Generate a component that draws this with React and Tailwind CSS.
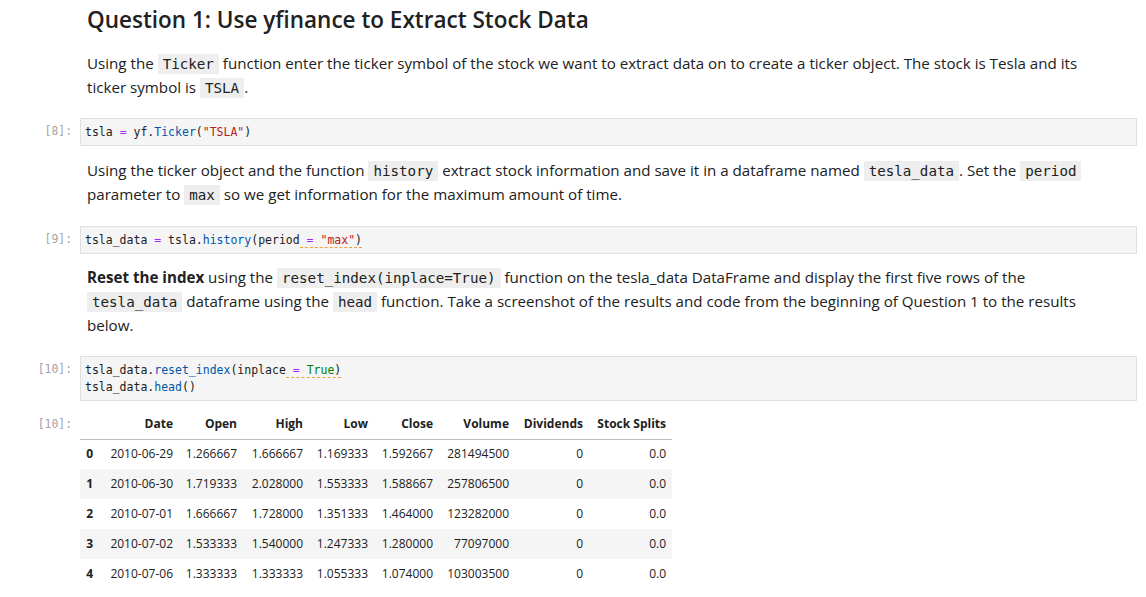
import React from "react";

const body = { fontFamily: '"Open Sans", "Noto Sans", sans-serif' };
const mono = { fontFamily: '"DejaVu Sans Mono", "Liberation Mono", monospace' };

function IC({ children }) {
  return (
    <code
      className="bg-[#eeeeee] px-[5px] py-[2px] text-[14.2px] leading-none text-[#212121]"
      style={mono}
    >
      {children}
    </code>
  );
}

function Prompt({ children }) {
  return (
    <div
      className="w-[80px] shrink-0 pr-[8px] text-right text-[11.4px] leading-[17px] text-[#a3a3a3]"
      style={mono}
    >
      {children}
    </div>
  );
}

function CodeCell({ n, children }) {
  return (
    <div className="flex">
      <Prompt>
        <div className="pt-[5px]">[{n}]:</div>
      </Prompt>
      <div
        className="flex-1 mr-[9px] border border-[#e0e0e0] bg-[#f5f5f5] px-[4px] pt-[5px] pb-[4px] text-[11.5px] leading-[17px] text-[#212121]"
        style={mono}
      >
        {children}
      </div>
    </div>
  );
}

const Op = ({ children }) => <span className="text-[#aa22ff]">{children}</span>;
const Pr = ({ children }) => <span className="text-[#0055aa]">{children}</span>;
const St = ({ children }) => <span className="text-[#ba2121]">{children}</span>;
const Bi = ({ children }) => <span className="text-[#008000]">{children}</span>;
const Lint = ({ children }) => (
  <span className="border-b border-dashed border-[#f0a040]">{children}</span>
);

const rows = [
  ["0", "2010-06-29", "1.266667", "1.666667", "1.169333", "1.592667", "281494500", "0", "0.0"],
  ["1", "2010-06-30", "1.719333", "2.028000", "1.553333", "1.588667", "257806500", "0", "0.0"],
  ["2", "2010-07-01", "1.666667", "1.728000", "1.351333", "1.464000", "123282000", "0", "0.0"],
  ["3", "2010-07-02", "1.533333", "1.540000", "1.247333", "1.280000", "77097000", "0", "0.0"],
  ["4", "2010-07-06", "1.333333", "1.333333", "1.055333", "1.074000", "103003500", "0", "0.0"],
];
const headers = ["", "Date", "Open", "High", "Low", "Close", "Volume", "Dividends", "Stock Splits"];
const widths = ["w-[19px]", "w-[80px]", "w-[64px]", "w-[66px]", "w-[65px]", "w-[65px]", "w-[76px]", "w-[74px]", "w-[83px]"];

export default function App() {
  return (
    <div className="w-[1146px] h-[597px] overflow-hidden bg-white text-[#212121]" style={body}>
      <div className="flex">
        <div className="w-[80px] shrink-0" />
        <div className="pl-[7px]">
          <h1 className="text-[22.5px] font-semibold leading-[40px] text-[#212121]">
            Question 1: Use yfinance to Extract Stock Data
          </h1>
          <p className="mt-[11px] text-[15.15px] leading-[24px]">
            Using the <IC>Ticker</IC> function enter the ticker symbol of the stock we want to extract data on to create a ticker object. The stock is Tesla and its
            <br />
            ticker symbol is <IC>TSLA</IC>.
          </p>
        </div>
      </div>

      <div className="mt-[19px]">
        <CodeCell n={8}>
          tsla <Op>=</Op> yf.<Pr>Ticker</Pr>(<St>"TSLA"</St>)
        </CodeCell>
      </div>

      <div className="flex">
        <div className="w-[80px] shrink-0" />
        <p className="pl-[7px] mt-[12px] text-[15.15px] leading-[24px]">
          Using the ticker object and the function <IC>history</IC> extract stock information and save it in a dataframe named <IC>tesla_data</IC>. Set the <IC>period</IC>
          <br />
          parameter to <IC>max</IC> so we get information for the maximum amount of time.
        </p>
      </div>

      <div className="mt-[20px]">
        <CodeCell n={9}>
          tsla_data <Op>=</Op> tsla.<Pr>history</Pr>(period<Lint> <Op>=</Op> <St>"max"</St>)</Lint>
        </CodeCell>
      </div>

      <div className="flex">
        <div className="w-[80px] shrink-0" />
        <p className="pl-[7px] mt-[11px] text-[15.15px] leading-[24px]">
          <b className="font-bold">Reset the index</b> using the <IC>reset_index(inplace=True)</IC> function on the tesla_data DataFrame and display the first five rows of the
          <br />
          <IC>tesla_data</IC> dataframe using the <IC>head</IC> function. Take a screenshot of the results and code from the beginning of Question 1 to the results
          <br />
          below.
        </p>
      </div>

      <div className="mt-[19px]">
        <CodeCell n={10}>
          <div>
            tsla_data.<Pr>reset_index</Pr>(inplace<Lint> <Op>=</Op> <Bi>True</Bi>)</Lint>
          </div>
          <div>
            tsla_data.<Pr>head</Pr>()
          </div>
        </CodeCell>
      </div>

      <div className="flex mt-[9px]">
        <Prompt>
          <div className="pt-[6px]">[10]:</div>
        </Prompt>
        <table className="border-collapse text-[12px] text-[#212121]" style={body}>
          <thead>
            <tr className="h-[29px] border-b border-[#bdbdbd]">
              {headers.map((h, i) => (
                <th key={i} className={`${widths[i]} px-[6px] text-right font-bold whitespace-nowrap`}>
                  {h}
                </th>
              ))}
            </tr>
          </thead>
          <tbody>
            {rows.map((r, ri) => (
              <tr key={ri} className={`h-[30px] ${ri % 2 === 1 ? "bg-[#f5f5f5]" : "bg-white"}`}>
                {r.map((c, ci) => (
                  <td
                    key={ci}
                    className={`${widths[ci]} px-[6px] whitespace-nowrap ${ci === 0 ? "font-bold text-right" : "text-right"}`}
                  >
                    {c}
                  </td>
                ))}
              </tr>
            ))}
          </tbody>
        </table>
      </div>
    </div>
  );
}
